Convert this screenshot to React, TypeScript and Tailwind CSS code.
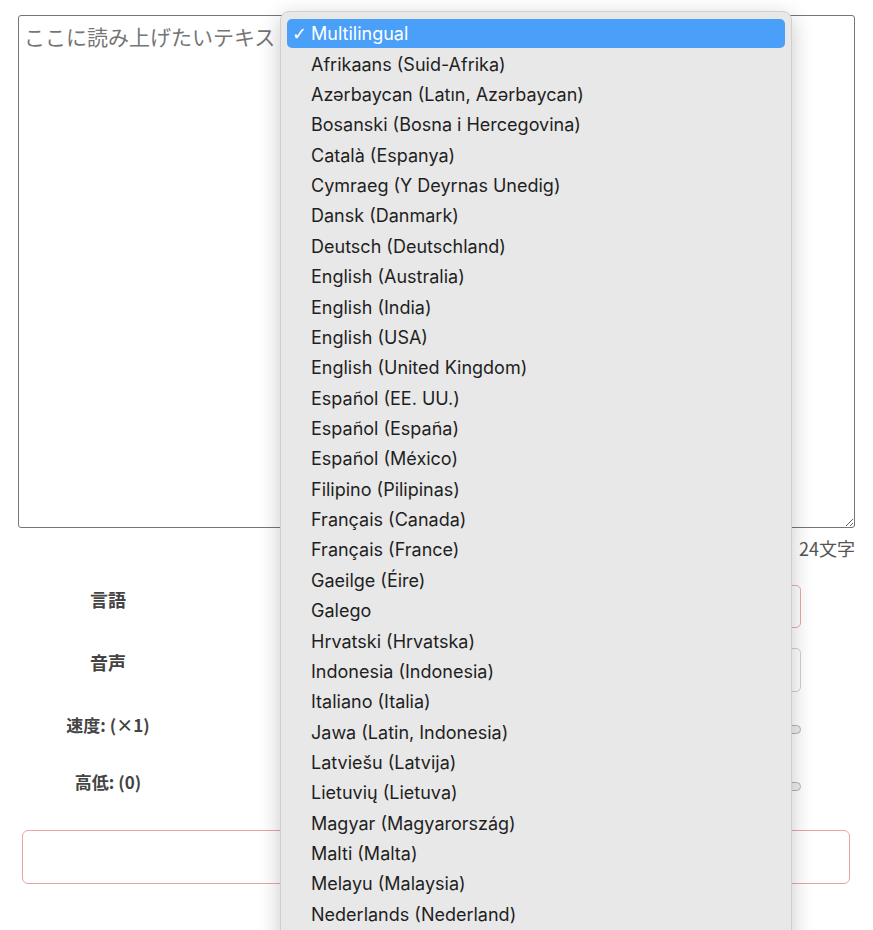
import React from 'react';

const languages = [
  'Afrikaans (Suid-Afrika)',
  'Azərbaycan (Latın, Azərbaycan)',
  'Bosanski (Bosna i Hercegovina)',
  'Català (Espanya)',
  'Cymraeg (Y Deyrnas Unedig)',
  'Dansk (Danmark)',
  'Deutsch (Deutschland)',
  'English (Australia)',
  'English (India)',
  'English (USA)',
  'English (United Kingdom)',
  'Español (EE. UU.)',
  'Español (España)',
  'Español (México)',
  'Filipino (Pilipinas)',
  'Français (Canada)',
  'Français (France)',
  'Gaeilge (Éire)',
  'Galego',
  'Hrvatski (Hrvatska)',
  'Indonesia (Indonesia)',
  'Italiano (Italia)',
  'Jawa (Latin, Indonesia)',
  'Latviešu (Latvija)',
  'Lietuvių (Lietuva)',
  'Magyar (Magyarország)',
  'Malti (Malta)',
  'Melayu (Malaysia)',
  'Nederlands (Nederland)',
];

function Track() {
  return (
    <div className="h-[9px] w-full rounded-full border border-[#b4b4b4] bg-[#efefef]" />
  );
}

export default function App() {
  return (
    <div className="relative h-[930px] overflow-hidden bg-white font-['Noto_Sans','Noto_Sans_CJK_JP',sans-serif] text-[#444]">
      <div className="px-[18px] pt-[15px]">
        <textarea
          className="block h-[513px] w-full resize-y rounded-[3px] border border-[#767676] px-[5px] pt-[5px] font-['Noto_Sans_CJK_JP',sans-serif] text-[21px] leading-[30px] text-[#333] placeholder:text-[#757575] outline-none"
          placeholder="ここに読み上げたいテキストを入力してください"
        />
        <p className="mt-[8px] text-right font-['Noto_Sans_CJK_JP',sans-serif] text-[18px] leading-[24px] text-[#555]">
          24文字
        </p>

        <div className="mt-[25px] grid grid-cols-[180px_1fr] pr-[54px] font-['Noto_Sans_CJK_JP',sans-serif]">
          <div className="pt-[1px] text-center text-[18px] font-bold leading-[27px]">言語</div>
          <div className="ml-[110px] h-[43px] rounded-[5px] border border-[#e8a7a7] bg-white" />

          <div className="mt-[20px] pt-[1px] text-center text-[18px] font-bold leading-[27px]">音声</div>
          <div className="ml-[110px] mt-[20px] h-[44px] rounded-[5px] border border-[#cfcfcf] bg-white" />

          <div className="mt-[19px] text-center text-[17px] font-bold leading-[27px]">速度: (×1)</div>
          <div className="ml-[110px] mt-[19px] flex items-center pt-[10px]">
            <Track />
          </div>

          <div className="mt-[30px] text-center text-[17px] font-bold leading-[27px]">高低: (0)</div>
          <div className="ml-[110px] mt-[30px] flex items-center pt-[10px]">
            <Track />
          </div>
        </div>

        <button className="mx-[4px] mt-[35px] block h-[54px] w-[828px] rounded-[6px] border border-[#e8a3a3] bg-white text-[17px] text-[#dc3545]">
          読み上げ
        </button>
      </div>

      <div className="absolute left-[280px] top-[11px] h-[940px] w-[512px] rounded-[9px] border border-[#d0d0d0] bg-[#e8e8e8] px-[6px] pt-[6.5px] font-['Inter','Noto_Sans',sans-serif] text-[18px] text-[#1f1f1f] shadow-[0_6px_22px_rgba(0,0,0,0.22)]">
        <div className="relative flex h-[29.5px] items-center rounded-[5px] bg-[#4a9ff9] pl-[24px] pt-[1px] text-white">
          <span className="absolute left-[5px] top-[1px] font-['DejaVu_Sans',sans-serif] text-[18px] font-bold">✓</span>
          Multilingual
        </div>
        {languages.map((l) => (
          <div key={l} className="flex h-[30.37px] items-center pl-[24px] pt-[2px]">
            {l}
          </div>
        ))}
      </div>
    </div>
  );
}
